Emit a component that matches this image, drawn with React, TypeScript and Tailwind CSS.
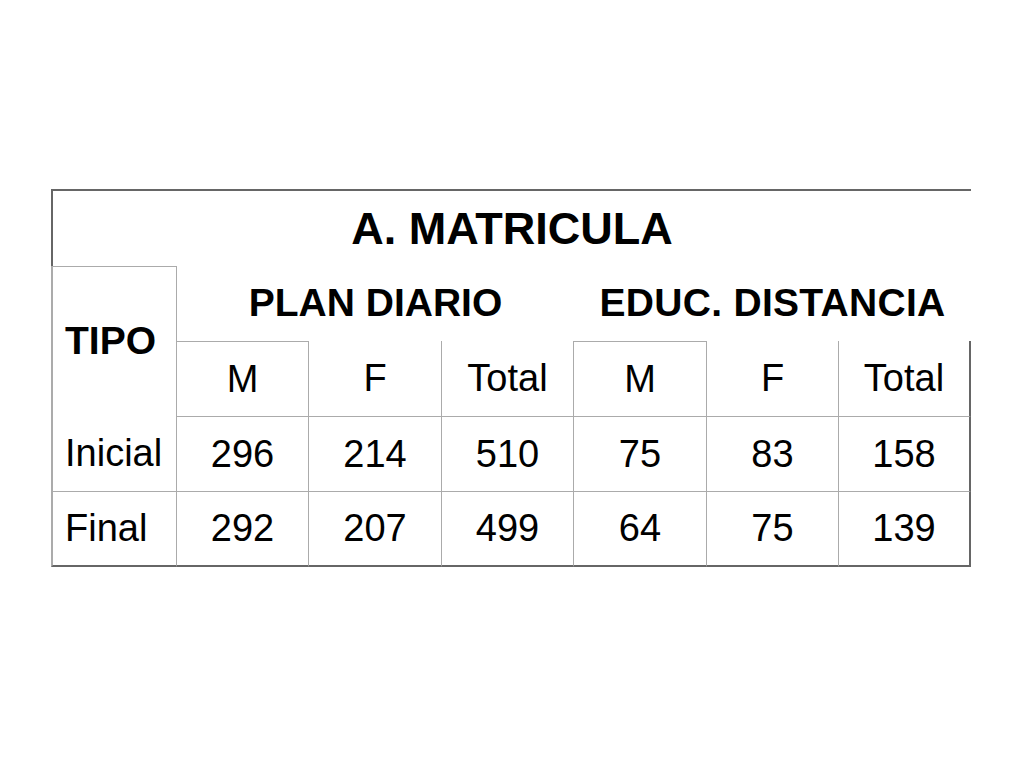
const inner = "border-[#ababab]";
const outer = "border-[#666666]";

const rows = [
  { label: "Inicial", values: [296, 214, 510, 75, 83, 158] },
  { label: "Final", values: [292, 207, 499, 64, 75, 139] },
];

const subHeads = ["M", "F", "Total", "M", "F", "Total"];

// columns 2..7, written out in full so Tailwind picks them up
const colStart = ["col-start-2", "col-start-3", "col-start-4", "col-start-5", "col-start-6", "col-start-7"];
const rowStart = ["row-start-4", "row-start-5"];

const App = () => {
  return (
    <div
      className="w-[1024px] h-[768px] bg-white text-black pt-[189px] pl-[51px]"
      style={{ fontFamily: '"Liberation Sans", Arial, sans-serif' }}
    >
      <div className="grid grid-cols-[126px_132px_133px_132px_133px_132px_132px] grid-rows-[77px_75px_75px_75px_76px] w-[921px]">
        {/* title */}
        <div className={`col-start-1 col-span-7 row-start-1 flex items-center justify-center border-t-2 border-l-2 ${outer} text-[45px] font-bold`}>
          A. MATRICULA
        </div>

        {/* TIPO */}
        <div className={`col-start-1 row-start-2 row-span-2 flex items-center pl-[12px] border-l-2 ${outer} border-t border-r ${inner}`}>
          <span className="text-[39px] font-bold">TIPO</span>
        </div>

        <div className="col-start-2 col-span-3 row-start-2 flex items-center justify-center text-[39px] font-bold">
          PLAN DIARIO
        </div>
        <div className="col-start-5 col-span-3 row-start-2 flex items-center justify-center text-[39px] font-bold tracking-[0.3px]">
          EDUC. DISTANCIA
        </div>

        {subHeads.map((h, i) => {
          const top = i === 0 || i === 3 ? `border-t ${inner}` : "";
          const right = i === 5 ? `border-r-2 ${outer}` : `border-r ${inner}`;
          return (
            <div key={i} className={`${colStart[i]} row-start-3 flex items-center justify-center text-[38px] ${top} ${right}`}>
              {h}
            </div>
          );
        })}

        {rows.map((r, ri) => {
          const last = ri === 1;
          return (
            <div key={r.label} className="contents">
              <div
                className={`col-start-1 ${rowStart[ri]} flex items-center pl-[12px] text-[38px] border-l-2 ${outer} border-r ${inner} ${
                  last ? `border-t border-t-[#ababab] border-b-2 border-b-[#666666]` : ""
                }`}
              >
                {r.label}
              </div>
              {r.values.map((v, vi) => (
                <div
                  key={vi}
                  className={`${colStart[vi]} ${rowStart[ri]} flex items-center justify-center text-[38px] border-t border-t-[#ababab] ${
                    vi === 5 ? "border-r-2 border-r-[#666666]" : "border-r border-r-[#ababab]"
                  } ${last ? "border-b-2 border-b-[#666666]" : ""}`}
                >
                  {v}
                </div>
              ))}
            </div>
          );
        })}
      </div>
    </div>
  );
};

export default App;
